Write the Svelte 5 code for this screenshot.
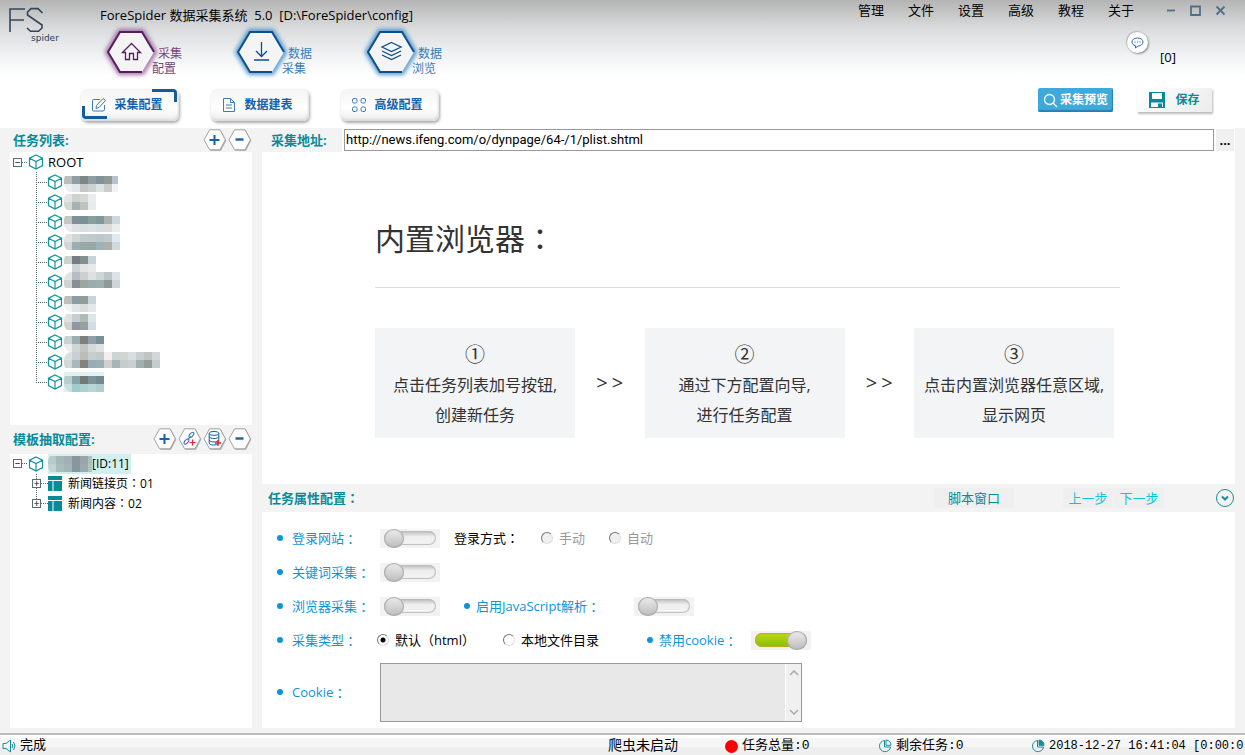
<script lang="ts">
  let activeTab: number = $state(0);
  let url: string = $state('http://news.ifeng.com/o/dynpage/64-/1/plist.shtml');
  let loginSite: boolean = $state(false);
  let keyword: boolean = $state(false);
  let browserMode: boolean = $state(false);
  let enableJs: boolean = $state(false);
  let disableCookie: boolean = $state(true);
  let sourceType: string = $state('html');
  let cookie: string = $state('');

  const menus = ['管理', '文件', '设置', '高级', '教程', '关于'];
  const modules = [
    { icon: 'home', first: '采集', second: '配置' },
    { icon: 'download', first: '数据', second: '采集' },
    { icon: 'layers', first: '数据', second: '浏览' }
  ];
  const tabs = [
    { icon: 'edit', label: '采集配置' },
    { icon: 'doc', label: '数据建表' },
    { icon: 'grid', label: '高级配置' }
  ];
  const steps = [
    { no: '①', lines: ['点击任务列表加号按钮,', '创建新任务'] },
    { no: '②', lines: ['通过下方配置向导,', '进行任务配置'] },
    { no: '③', lines: ['点击内置浏览器任意区域,', '显示网页'] }
  ];
  const templates = [
    { name: '新闻链接页', id: '01' },
    { name: '新闻内容', id: '02' }
  ];

  // masked task names: two rows of 8px cells each, dy shifts the block inside the row
  const tasks = [
    { dy: 4, w: 54, rows: [['#bfbcb8', '#8c9fa8', '#7c8883', '#8e9ea4', '#809498', '#909a94', '#b9c3cd'], ['#eceeee', '#e2e7e7', '#c6c8c5', '#cdd1d2', '#dbe3e4', '#cdccca', '#f1f3f5']] },
    { dy: 2, w: 32, rows: [['#e4e5e2', '#ccd3d1', '#d6d9d5', '#ebeeef'], ['#d5d7d2', '#a6b3b4', '#bcc3c1', '#e8ecee']] },
    { dy: 4, w: 56, rows: [['#c6c7c2', '#7d9196', '#7c8f93', '#889f9b', '#82979b', '#adb3aa', '#cdd7e2'], ['#e8eaec', '#dde2e4', '#d8dfe1', '#dbe2e4', '#d6dee2', '#dddcda', '#ebecee']] },
    { dy: 2, w: 56, rows: [['#e2e4e3', '#d2d6d4', '#c3cccb', '#c1caca', '#bcc8ca', '#c1cacd', '#e0e8f0'], ['#d3d6d2', '#9cafb4', '#99a9aa', '#96a7a5', '#9eb2b7', '#abb1a8', '#d0d8e0']] },
    { dy: 4, w: 32, rows: [['#ccd3cd', '#777b84', '#85908b', '#c6d3da'], ['#fafafa', '#ced3d5', '#e1e5e5', '#e6eaeb']] },
    { dy: 0, w: 56, rows: [['#e2e4e3', '#b9bdc1', '#ccd0cf', '#dde1df', '#ced6d8', '#bac6c7', '#dce2e5'], ['#d0d4d0', '#898e94', '#9ba69f', '#9bacac', '#9eafb2', '#909996', '#cdd4da']] },
    { dy: 4, w: 32, rows: [['#bfbfbb', '#889da4', '#929d98', '#c9d3da'], ['#f0f1f0', '#e0e5e6', '#d9dddb', '#e3e8e9']] },
    { dy: 2, w: 32, rows: [['#e1e3df', '#c7cfd4', '#b2bcb7', '#dfe6e6'], ['#d3d2cd', '#9097a0', '#95a1a0', '#d4dce4']] },
    { dy: 4, w: 40, rows: [['#ccd2d0', '#9caeb2', '#7f8079', '#8ea1a8', '#789198'], ['#eaeceb', '#cfd6d8', '#c4c4c2', '#d3d9dc', '#dde3e3']] },
    { dy: 0, w: 96, rows: [['#dcdfde', '#c9cfd2', '#bdbcb7', '#c5ced1', '#c3cacd', '#f3efee', '#ccd4d4', '#d1d5d4', '#d9dede', '#c9cfcf', '#c0c4c2', '#d2d8d9'], ['#d5d9d6', '#a8b9bb', '#82847b', '#98acb3', '#9bafb4', '#d2cfd0', '#a6b6b8', '#c6cccb', '#c8d0d0', '#a1afb1', '#949d9c', '#c5cccd']] },
    { dy: 4, w: 40, selected: true, rows: [['#b9cecb', '#88a4aa', '#727a71', '#7d9299', '#718a90'], ['#c9dedd', '#9fcccc', '#abd2d1', '#b9d5d7', '#add0cf']] }
  ];
  const rootMask = [['#b9cbc9', '#a5b8b9', '#a0b0b3', '#87979c', '#98a6ab', '#aebfbf'], ['#c1d4d2', '#a9bdbd', '#a3b5b7', '#86989d', '#9baab0', '#b1c3c3']];
</script>

{#snippet colon()}<span class="colon">：</span>{/snippet}

{#snippet cube()}
  <svg class="cube" viewBox="0 0 16 16">
    <path d="M8 1 L14.5 4.2 V11.6 L8 15 L1.5 11.6 V4.2 Z M1.5 4.2 L8 7.5 L14.5 4.2 M8 7.5 V15" />
  </svg>
{/snippet}

{#snippet mosaic(rows: string[][], w: number, dy: number)}
  <svg class="mosaic" style="width: {w}px" viewBox="0 0 {w} 20">
    {#each rows as row, r}
      {#each row as color, c}
        <rect x={c * 8} y={dy + r * 8} width="8" height="8" fill={color} />
      {/each}
    {/each}
  </svg>
{/snippet}

{#snippet hexButton(kind: string, title: string)}
  <button class="hex-btn" aria-label={title} {title}>
    <svg viewBox="0 0 24 24">
      <path d="M7.5 2.5 H18 L23.3 12.5 L18 22.8 H7.5 L2 12.5 Z" fill="#aaa" />
      <path d="M6.6 1.8 H17 L22.4 11.8 L17 21.8 H6.6 L1 11.8 Z" fill="#fcfcfc" stroke="#a3a3a3" />
      {#if kind === 'plus'}
        <path d="M11.5 7 V17 M6.5 12 H16.5" stroke="#1561ab" stroke-width="2" />
      {:else if kind === 'minus'}
        <path d="M7.5 11.5 H15.5" stroke="#1561ab" stroke-width="2.4" />
      {:else if kind === 'link'}
        <g fill="none" stroke="#2b6fae">
          <ellipse cx="8.5" cy="14.5" rx="1.6" ry="3.2" transform="rotate(42 8.5 14.5)" />
          <ellipse cx="13.4" cy="8" rx="1.6" ry="3.2" transform="rotate(42 13.4 8)" />
          <path d="M9.5 13.2 L13 9.2" />
        </g>
        <path d="M14.5 12.5 V18.5 M11.5 15.5 H17.5" stroke="#f01e28" stroke-width="1.2" />
      {:else}
        <g fill="none" stroke="#1561ab">
          <ellipse cx="11" cy="6.4" rx="4.8" ry="2" />
          <path d="M6.2 6.4 V16 C6.2 18.6 14 18.6 15.8 16.4 V6.4 M6.2 9.6 C6.6 12.2 15.4 12.2 15.8 9.6 M6.2 13 C6.6 15.6 15.4 15.6 15.8 13" />
        </g>
        <path d="M15 13 V19 M12 16 H18" stroke="#f01e28" stroke-width="1.4" />
      {/if}
    </svg>
  </button>
{/snippet}

{#snippet clock(filled: boolean)}
  <svg class="status-icon" viewBox="0 0 14 14">
    <path d="M6.5 1.5 A5.6 5.6 0 1 0 12.6 8 H6.5 Z" fill="none" stroke="#178f9a" />
    <path d="M8 1 A5.5 5.5 0 0 1 13 6.3 H8 Z" fill={filled ? '#178f9a' : 'none'} stroke="#178f9a" />
  </svg>
{/snippet}

<div class="app">
  <header>
    <svg class="logo" viewBox="0 0 64 48" aria-label="FS spider">
      <g fill="none" stroke="#33475a" stroke-width="1.6">
        <path d="M10 32 V9 H25 M10 20 H24" />
        <path d="M42.5 13 L38 8.6 H31 L27.5 12 V15 L42 25 V28 L38.5 31.3 H30.5 L27 28" />
      </g>
      <text x="31" y="41">spider</text>
    </svg>

    <div class="head-main">
      <h1>ForeSpider 数据采集系统&nbsp; 5.0&nbsp; [D:\ForeSpider\config]</h1>
      <nav class="modules">
        {#each modules as m, i}
          <button class="module" class:purple={i === 0}>
            <svg class="hex" viewBox="0 0 54 48">
              <path class="glow" d="M16 4 H38 L50 24 L38 44 H16 L4 24 Z" />
              <path class="face" d="M16 4 H38 L50 24 L38 44 H16 L4 24 Z" />
              <path class="edge" d="M38 44 H16 L4 24 L16 4 H38 L50 24" />
              {#if m.icon === 'home'}
                <path class="glyph" d="M18.5 24.5 L27.5 15.5 L36.5 24.5 H33.5 V31.5 H29.5 V25.5 H25.5 V31.5 H21.5 V24.5 Z" />
              {:else if m.icon === 'download'}
                <path class="glyph" d="M27.5 14 V28 M22 23 L27.5 28.5 L33 23 M20 32 H35" />
              {:else}
                <path class="glyph" d="M27.5 14.5 L37 19 L27.5 23.5 L18 19 Z M18 23 L27.5 27.5 L37 23 M18 27 L27.5 31.5 L37 27" />
              {/if}
            </svg>
            <span class="module-label"><span>{m.first}</span><br />{m.second}</span>
          </button>
        {/each}
      </nav>
      <div class="tabs">
        {#each tabs as t, i}
          <button class="tab" class:active={activeTab === i} onclick={() => (activeTab = i)}>
            <svg viewBox="0 0 16 16">
              {#if t.icon === 'edit'}
                <path d="M9 2.5 H2.5 Q1.5 2.5 1.5 3.5 V13 Q1.5 14 2.5 14 H12 Q13.5 14 13.5 12.5 V8 M5 11.5 L5.5 8.5 L12 1.5 L14.5 3.5 L8 10.5 Z" />
              {:else if t.icon === 'doc'}
                <path d="M2.5 1.5 H9.5 L13.5 5.5 V14.5 H2.5 Z M9.5 1.5 V5.5 H13.5 M5 8 H11 M5 11 H11" />
              {:else}
                <rect x="1.5" y="1.5" width="4.5" height="4.5" rx="1.5" />
                <rect x="10" y="1.5" width="4.5" height="4.5" rx="1.5" />
                <rect x="1.5" y="10" width="4.5" height="4.5" rx="1.5" />
                <rect x="10" y="10" width="4.5" height="4.5" rx="1.5" />
              {/if}
            </svg>
            {t.label}
          </button>
        {/each}
      </div>
    </div>

    <div class="head-side">
      <div class="menu-row">
        <nav class="menus">
          {#each menus as m}
            <button>{m}</button>
          {/each}
        </nav>
        <div class="window-btns">
          <button aria-label="最小化"><svg viewBox="0 0 11 11"><path d="M2 5.5 H10" /></svg></button>
          <button aria-label="最大化"><svg viewBox="0 0 11 11"><path d="M1 1.5 H10 V10 H1 Z" /></svg></button>
          <button aria-label="关闭"><svg viewBox="0 0 11 11"><path d="M1.5 1.5 L9.5 9.5 M9.5 1.5 L1.5 9.5" /></svg></button>
        </div>
      </div>
      <div class="messages">
        <button class="msg" aria-label="消息">
          <svg viewBox="0 0 13 12"><path d="M6.5 1 C10 1 12 2.8 12 5 C12 7.5 9.5 9 7 9 L4.5 11 V8.7 C2 8 1 6.8 1 5 C1 2.8 3 1 6.5 1 Z" /><path d="M3.5 5 H10" stroke-dasharray="1 1.5" /></svg>
        </button>
        <span>[0]</span>
      </div>
      <div class="actions">
        <button class="preview">
          <svg viewBox="0 0 15 15"><circle cx="6.5" cy="6.5" r="5" /><path d="M10 10 L14 14" /></svg>采集预览
        </button>
        <button class="save">
          <svg viewBox="0 0 16 16"><path d="M0 0 H16 V16 H0 Z" fill="#078b98" /><rect x="3" y="1" width="10" height="6" fill="#fff" /><rect x="2" y="10.5" width="12" height="4.5" fill="#f4f4f4" /><rect x="9" y="11.5" width="4" height="3.5" fill="#078b98" /></svg>保存
        </button>
      </div>
    </div>
  </header>

  <main>
    <aside>
      <div class="panel-head">
        <h2>任务列表:</h2>
        {@render hexButton('plus', '添加任务')}
        {@render hexButton('minus', '删除任务')}
      </div>
      <div class="tree">
        <div class="node">
          <span class="expander">−</span><i class="dots"></i>{@render cube()}<span>ROOT</span>
        </div>
        <ul>
          {#each tasks as t}
            <li>
              <i class="dots wide"></i>{@render cube()}
              <span class="mask" class:selected={t.selected}>{@render mosaic(t.rows, t.w, t.dy)}</span>
            </li>
          {/each}
        </ul>
      </div>

      <div class="panel-head tall">
        <h2>模板抽取配置:</h2>
        {@render hexButton('plus', '添加模板')}
        {@render hexButton('link', '添加链接')}
        {@render hexButton('data', '添加数据')}
        {@render hexButton('minus', '删除模板')}
      </div>
      <div class="tree small">
        <div class="node">
          <span class="expander">−</span><i class="dots"></i>{@render cube()}
          <span class="root-name">{@render mosaic(rootMask, 44, 2)}[ID:11]</span>
        </div>
        <ul class="templates">
          {#each templates as t}
            <li>
              <span class="expander">+</span><i class="dots"></i>
              <svg class="sheet" viewBox="0 0 14 15"><path d="M0 0 H14 V4 H0 Z M0 5 H4.5 V15 H0 Z M5.5 5 H14 V15 H5.5 Z" fill="#078b98" /></svg>
              <span>{t.name}{@render colon()}{t.id}</span>
            </li>
          {/each}
        </ul>
      </div>
    </aside>

    <section>
      <div class="address">
        <label for="url">采集地址:</label>
        <input id="url" type="text" bind:value={url} />
        <button>...</button>
      </div>

      <div class="browser">
        <h3>内置浏览器{@render colon()}</h3>
        <div class="steps">
          {#each steps as s, i}
            {#if i > 0}
              <span class="arrow"><span>&gt;</span><span>&gt;</span></span>
            {/if}
            <div class="step">
              <b>{s.no}</b>
              {#each s.lines as line}
                <p>{line}</p>
              {/each}
            </div>
          {/each}
        </div>
      </div>

      <div class="config-head">
        <h2>任务属性配置{@render colon()}</h2>
        <button class="script-btn">脚本窗口</button>
        <button class="step-btn">上一步</button>
        <button class="step-btn">下一步</button>
        <button class="fold" aria-label="收起">
          <svg viewBox="0 0 20 20"><circle cx="10" cy="10" r="8.5" /><path d="M7 8.5 L10 11.5 L13 8.5" stroke-width="2" /></svg>
        </button>
      </div>

      <form class="config">
        <div class="row">
          <label class="name" for="login">登录网站{@render colon()}</label>
          <input id="login" class="toggle" type="checkbox" bind:checked={loginSite} />
          <span class="plain">登录方式{@render colon()}</span>
          <label class="radio muted"><input type="radio" name="login-mode" disabled />手动</label>
          <label class="radio muted"><input type="radio" name="login-mode" disabled />自动</label>
        </div>
        <div class="row">
          <label class="name" for="keyword">关键词采集{@render colon()}</label>
          <input id="keyword" class="toggle" type="checkbox" bind:checked={keyword} />
        </div>
        <div class="row">
          <label class="name" for="browser">浏览器采集{@render colon()}</label>
          <input id="browser" class="toggle" type="checkbox" bind:checked={browserMode} />
          <label class="name js" for="js">启用JavaScript解析{@render colon()}</label>
          <input id="js" class="toggle" type="checkbox" bind:checked={enableJs} />
        </div>
        <div class="row">
          <span class="name short">采集类型{@render colon()}</span>
          <label class="radio type"><input type="radio" name="type" value="html" bind:group={sourceType} />默认（html）</label>
          <label class="radio type"><input type="radio" name="type" value="local" bind:group={sourceType} />本地文件目录</label>
          <label class="name no-cookie" for="no-cookie">禁用cookie{@render colon()}</label>
          <input id="no-cookie" class="toggle" type="checkbox" bind:checked={disableCookie} />
        </div>
        <div class="row cookie-row">
          <label class="name" for="cookie">Cookie{@render colon()}</label>
          <div class="cookie-box">
            <textarea id="cookie" bind:value={cookie}></textarea>
            <div class="scroll">
              <svg viewBox="0 0 10 6"><path d="M1 5 L5 1 L9 5" /></svg>
              <svg viewBox="0 0 10 6"><path d="M1 1 L5 5 L9 1" /></svg>
            </div>
          </div>
        </div>
      </form>
    </section>
  </main>

  <footer>
    <span class="state">
      <svg class="status-icon" viewBox="0 0 14 14"><path d="M1 4.5 H4 L8.5 1 V13 L4 9.5 H1 Z M10 5 Q11.5 7 10 9 M11.5 3 Q14.5 7 11.5 11" fill="none" stroke="#178f9a" /></svg>
      完成
    </span>
    <span class="crawler">爬虫未启动</span>
    <span class="count"><i class="red-dot"></i>任务总量:0</span>
    <span class="count">{@render clock(false)}剩余任务:0</span>
    <span class="time">{@render clock(true)}2018-12-27 16:41:04 [0:00:0</span>
  </footer>
</div>

<style>
  :global(body) {
    margin: 0;
  }

  .app {
    display: flex;
    flex-direction: column;
    min-height: 100vh;
    background: #f3f3f3;
    font-family: "Open Sans", "Noto Sans CJK SC", sans-serif;
    font-size: 13px;
    line-height: 20px;
    color: #000;
  }

  button,
  input,
  textarea {
    font: inherit;
    color: inherit;
    margin: 0;
    padding: 0;
    border: none;
    background: none;
    box-sizing: border-box;
  }

  h1,
  h2,
  h3,
  p,
  ul {
    margin: 0;
    padding: 0;
    font-weight: normal;
  }

  svg {
    display: block;
    flex: none;
  }

  /* the TC face centres the full-width colon */
  .colon {
    font-family: "Noto Sans CJK TC", sans-serif;
    line-height: 1;
  }

  /* header */
  header {
    display: flex;
    height: 128px;
    background: linear-gradient(#b4b4b4, #dadbdc 28px, #f0f1f2 54px, #fff 76px);
  }

  .logo {
    width: 64px;
    height: 48px;
    margin-right: 16px;
  }

  .logo text {
    font-family: "DejaVu Sans", sans-serif;
    font-size: 9px;
    fill: #24405c;
  }

  .head-main {
    flex: 1;
  }

  h1 {
    padding: 5px 0 0 20px;
    font-size: 13px;
    line-height: 20px;
    height: 23px;
    white-space: nowrap;
  }

  .modules {
    display: flex;
    padding-left: 24px;
  }

  .module {
    display: flex;
    width: 130px;
    color: #3a7cb6;
    --edge: #0d4f8c;
    --glow: #2f86c9;
    text-align: left;
  }

  .module.purple {
    color: #76457c;
    --edge: #571d5e;
    --glow: #91559a;
  }

  .hex {
    width: 54px;
    height: 48px;
    overflow: visible;
  }

  .glow {
    fill: none;
    stroke: var(--glow);
    stroke-width: 6;
    filter: blur(2px);
    opacity: 0.8;
  }

  .face {
    fill: #f4f4f5;
  }

  .edge {
    fill: none;
    stroke: var(--edge);
    stroke-width: 2;
  }

  .glyph {
    fill: none;
    stroke: var(--edge);
    stroke-width: 1.3;
  }

  .module-label {
    margin: 18px 0 0 -6px;
    font-size: 12px;
    line-height: 15px;
  }

  .module-label span {
    padding-left: 6px;
  }

  .tabs {
    display: flex;
    gap: 32px;
    padding: 13px 0 0 1px;
  }

  .tab {
    position: relative;
    display: flex;
    align-items: center;
    justify-content: center;
    gap: 7px;
    width: 98px;
    height: 32px;
    padding-right: 6px;
    border-radius: 6px;
    background: linear-gradient(#f4f4f4, #fff 60%, #ececec);
    box-shadow: 1px 2px 3px #aaa, inset -1px -2px 2px #ddd;
    color: #1561ab;
    font-size: 12px;
    font-weight: bold;
  }

  .tab svg {
    width: 16px;
    height: 16px;
    fill: none;
    stroke: #3a7cb6;
  }

  .tab.active::before,
  .tab.active::after {
    content: "";
    position: absolute;
    width: 22px;
    height: 10px;
    border: 0 solid #125b9c;
  }

  .tab.active::before {
    top: 0;
    right: 2px;
    border-width: 3px 3px 0 0;
    border-top-right-radius: 4px;
  }

  .tab.active::after {
    bottom: 2px;
    left: 1px;
    border-width: 0 0 3px 3px;
    border-bottom-left-radius: 4px;
  }

  .head-side {
    display: flex;
    flex-direction: column;
    align-items: flex-end;
  }

  .menu-row,
  .menus,
  .window-btns {
    display: flex;
    align-items: center;
  }

  .menu-row {
    padding-right: 19px;
    gap: 31px;
  }

  .menus {
    gap: 24px;
    font-size: 13px;
  }

  .window-btns {
    gap: 14px;
  }

  .window-btns svg {
    width: 11px;
    height: 11px;
    fill: none;
    stroke: #4f7188;
    stroke-width: 1.8;
  }

  .messages {
    display: flex;
    padding: 12px 69px 0 0;
    gap: 12px;
    height: 56px;
    box-sizing: border-box;
  }

  .messages span {
    padding-top: 15px;
  }

  .msg {
    display: flex;
    align-items: center;
    justify-content: center;
    width: 21px;
    height: 21px;
    border-radius: 50%;
    background: #fdfdfd;
    box-shadow: 1px 1px 2px #888, -1px -1px 1px #bbb;
  }

  .msg svg {
    width: 13px;
    height: 12px;
    fill: none;
    stroke: #2b6fae;
  }

  .actions {
    display: flex;
    gap: 24px;
    padding: 12px 33px 0 0;
  }

  .actions button {
    display: flex;
    align-items: center;
    justify-content: center;
    width: 75px;
    height: 24px;
    font-size: 12px;
    font-weight: bold;
  }

  .preview {
    gap: 2px;
    border-radius: 2px;
    background: #3fa9dc;
    box-shadow: inset -1px -2px 1px #2980b0;
    color: #fff;
  }

  .preview svg {
    width: 15px;
    height: 15px;
    fill: none;
    stroke: #fff;
    stroke-width: 1.3;
  }

  .save {
    gap: 10px;
    background: linear-gradient(135deg, #fff, #ececec);
    box-shadow: 1px 2px 2px #bbb;
    color: #078b98;
  }

  .save svg {
    width: 16px;
    height: 16px;
  }

  /* workspace */
  main {
    flex: 1;
    display: flex;
    gap: 10px;
    padding: 0 10px 5px;
  }

  h2 {
    font-size: 13px;
    font-weight: bold;
    color: #078b98;
  }

  aside {
    display: flex;
    flex-direction: column;
    flex: none;
    width: 242px;
  }

  .panel-head {
    display: flex;
    align-items: center;
    gap: 1px;
    height: 24px;
  }

  .panel-head.tall {
    height: 29px;
  }

  .panel-head h2 {
    flex: 1;
    padding-left: 3px;
  }

  .hex-btn,
  .hex-btn svg {
    width: 24px;
    height: 24px;
  }

  .tree {
    flex: 1;
    background: #fff;
    white-space: nowrap;
  }

  .tree.small {
    flex-basis: 2px;
    font-size: 12px;
  }

  .tree ul {
    list-style: none;
    margin-left: 26px;
  }

  .node,
  .tree li {
    display: flex;
    align-items: center;
    height: 20px;
  }

  .node {
    padding-left: 3px;
  }

  /* dotted trunk, cut at the middle of the last row */
  .tree li {
    background: repeating-linear-gradient(#50706f 0 1px, transparent 1px 2px) 0 0 / 1px 100% no-repeat;
  }

  .tree li:last-child {
    background-size: 1px 50%;
  }

  .expander {
    display: flex;
    align-items: center;
    justify-content: center;
    width: 7px;
    height: 7px;
    border: 1px solid #50706f;
    background: #fff;
    font-size: 10px;
    line-height: 7px;
  }

  .dots {
    width: 6px;
    height: 1px;
    background: repeating-linear-gradient(90deg, #50706f 0 1px, transparent 1px 2px);
  }

  .dots.wide {
    width: 11px;
  }

  .cube {
    width: 16px;
    height: 16px;
    fill: none;
    stroke: #0f959f;
    stroke-width: 1.2;
  }

  .node .cube {
    margin-right: 4px;
  }

  .mask {
    margin-left: 1px;
  }

  .mosaic {
    height: 20px;
    border-radius: 8px 0 0 8px;
  }

  .mask.selected {
    background: #def3f2;
  }

  .root-name {
    display: flex;
    background: #cff0ee;
    padding-right: 2px;
  }

  .templates .expander {
    margin-left: -4px;
  }

  .templates .dots {
    width: 7px;
  }

  .sheet {
    width: 14px;
    height: 15px;
    margin-right: 6px;
  }

  section {
    flex: 1;
    display: flex;
    flex-direction: column;
    min-width: 0;
  }

  .address {
    display: flex;
    align-items: center;
    gap: 2px;
    height: 24px;
    background: #fff;
  }

  .address label {
    width: 71px;
    padding-left: 9px;
    line-height: 24px;
    background: #f3f3f3;
    color: #078b98;
    font-weight: bold;
  }

  .address input {
    flex: 1;
    min-width: 0;
    height: 22px;
    padding: 0 1px 2px;
    border: 1px solid #999;
    background: #fff;
    font-family: Roboto, sans-serif;
  }

  .address button {
    width: 18px;
    height: 22px;
    margin-right: 1px;
    background: #f0f0f0;
    font-weight: bold;
  }

  .browser {
    flex: 1;
    padding: 62px 115px 46px 113px;
    background: #fff;
    color: #333;
  }

  h3 {
    padding-bottom: 23px;
    border-bottom: 1px solid #ddd;
    font-size: 30px;
    line-height: 50px;
  }

  .steps {
    display: flex;
    justify-content: space-between;
    align-items: center;
    padding: 40px 6px 0 0;
  }

  .step {
    width: 200px;
    padding: 12px 0 8px;
    background: #f2f4f6;
    text-align: center;
    font-size: 16px;
    line-height: 30px;
    white-space: nowrap;
  }

  .step b {
    display: block;
    font-size: 20px;
    font-weight: normal;
  }

  .arrow {
    display: flex;
    font-size: 20px;
    gap: 4px;
  }

  .config-head {
    display: flex;
    align-items: center;
    height: 28px;
  }

  .config-head h2 {
    flex: 1;
    padding-left: 6px;
  }

  .script-btn {
    width: 80px;
    margin-right: 49px;
    background: #efefef;
    color: #078b98;
  }

  .step-btn {
    width: 50px;
    margin-right: 1px;
    background: #efefef;
    color: #0cc5dc;
  }

  .fold {
    margin-left: 50px;
  }

  .fold svg {
    width: 20px;
    height: 20px;
    fill: none;
    stroke: #178f9a;
  }

  .config {
    padding: 9px 0 1px 15px;
    background: #fff;
  }

  .row {
    display: flex;
    align-items: center;
    height: 34px;
  }

  .name {
    display: flex;
    align-items: center;
    width: 103px;
    color: #0b95d8;
  }

  .name::before {
    content: "";
    width: 6px;
    height: 6px;
    margin-right: 9px;
    border-radius: 50%;
    background: #0b95d8;
  }

  .name.short {
    width: 100px;
  }

  .name.js {
    width: 170px;
    margin-left: 24px;
  }

  .name.js::before,
  .name.no-cookie::before {
    margin-right: 6px;
  }

  .plain {
    width: 87px;
    margin-left: 14px;
  }

  .toggle {
    appearance: none;
    display: flex;
    align-items: center;
    width: 60px;
    height: 19px;
    padding: 0 4px;
    background: #f2f2f2;
  }

  .toggle::before {
    content: "";
    width: 52px;
    height: 14px;
    border-radius: 7px;
    background: linear-gradient(#bbb, #eee 40%, #f4f4f4);
    box-shadow: inset 0 0 1px 1px #bcbcbc;
  }

  .toggle::after {
    content: "";
    width: 20px;
    height: 19px;
    margin-left: -52px;
    border-radius: 50%;
    background: linear-gradient(#ececec, #bcbcbc);
    box-shadow: inset 0 0 1px 1px #a8a8a8;
    flex: none;
  }

  .toggle:checked::before {
    background: linear-gradient(#b7dc1c, #8ebc00);
    box-shadow: inset 0 0 1px 1px #c4a62c;
  }

  .toggle:checked::after {
    margin-left: -20px;
  }

  .radio {
    display: flex;
    align-items: center;
    gap: 6px;
    width: 68px;
  }

  .radio.type {
    width: 126px;
  }

  .radio input {
    appearance: none;
    width: 12px;
    height: 12px;
    border: 1px solid;
    border-color: #777 #ddd #ddd #777;
    border-radius: 50%;
    background: #fff;
  }

  .radio.muted {
    color: #999;
  }

  .radio.muted input {
    background: #f0f0f0;
  }

  .radio input:checked {
    background: radial-gradient(#000 0 2px, #fff 3px);
  }

  .name.no-cookie {
    width: 104px;
    margin-left: 18px;
  }

  .cookie-row {
    height: 70px;
  }

  .cookie-box {
    display: flex;
    width: 422px;
    height: 59px;
    box-sizing: border-box;
    border: 1px solid #999;
    background: #e8e8e8;
  }

  .cookie-box textarea {
    flex: 1;
    resize: none;
    outline: none;
    overflow: hidden;
  }

  .scroll {
    display: flex;
    flex-direction: column;
    justify-content: space-between;
    align-items: center;
    width: 16px;
    padding: 6px 0;
    box-sizing: border-box;
    background: #f0f0f0;
    border-left: 1px solid #fff;
  }

  .scroll svg {
    width: 10px;
    height: 6px;
    fill: none;
    stroke: #aaa;
    stroke-width: 1.5;
  }

  /* status bar */
  footer {
    display: flex;
    height: 18px;
    padding-top: 2px;
    border-top: 2px solid #bbb;
    background: linear-gradient(#fff 3px, #f6f6f6 3px 12px, #eee 12px);
    font-family: "Liberation Mono", "Noto Sans CJK SC", monospace;
    font-size: 12px;
    line-height: 18px;
    white-space: nowrap;
  }

  footer span {
    display: flex;
    align-items: center;
    gap: 4px;
  }

  .state {
    flex: 1;
    padding-left: 2px;
    font-size: 13px;
  }

  .crawler {
    width: 117px;
    font-size: 14px;
  }

  .count {
    width: 153px;
    font-size: 13px;
  }

  .time {
    width: 214px;
  }

  .status-icon {
    width: 14px;
    height: 14px;
  }

  .red-dot {
    width: 13px;
    height: 13px;
    border-radius: 50%;
    background: #f00;
  }
</style>
